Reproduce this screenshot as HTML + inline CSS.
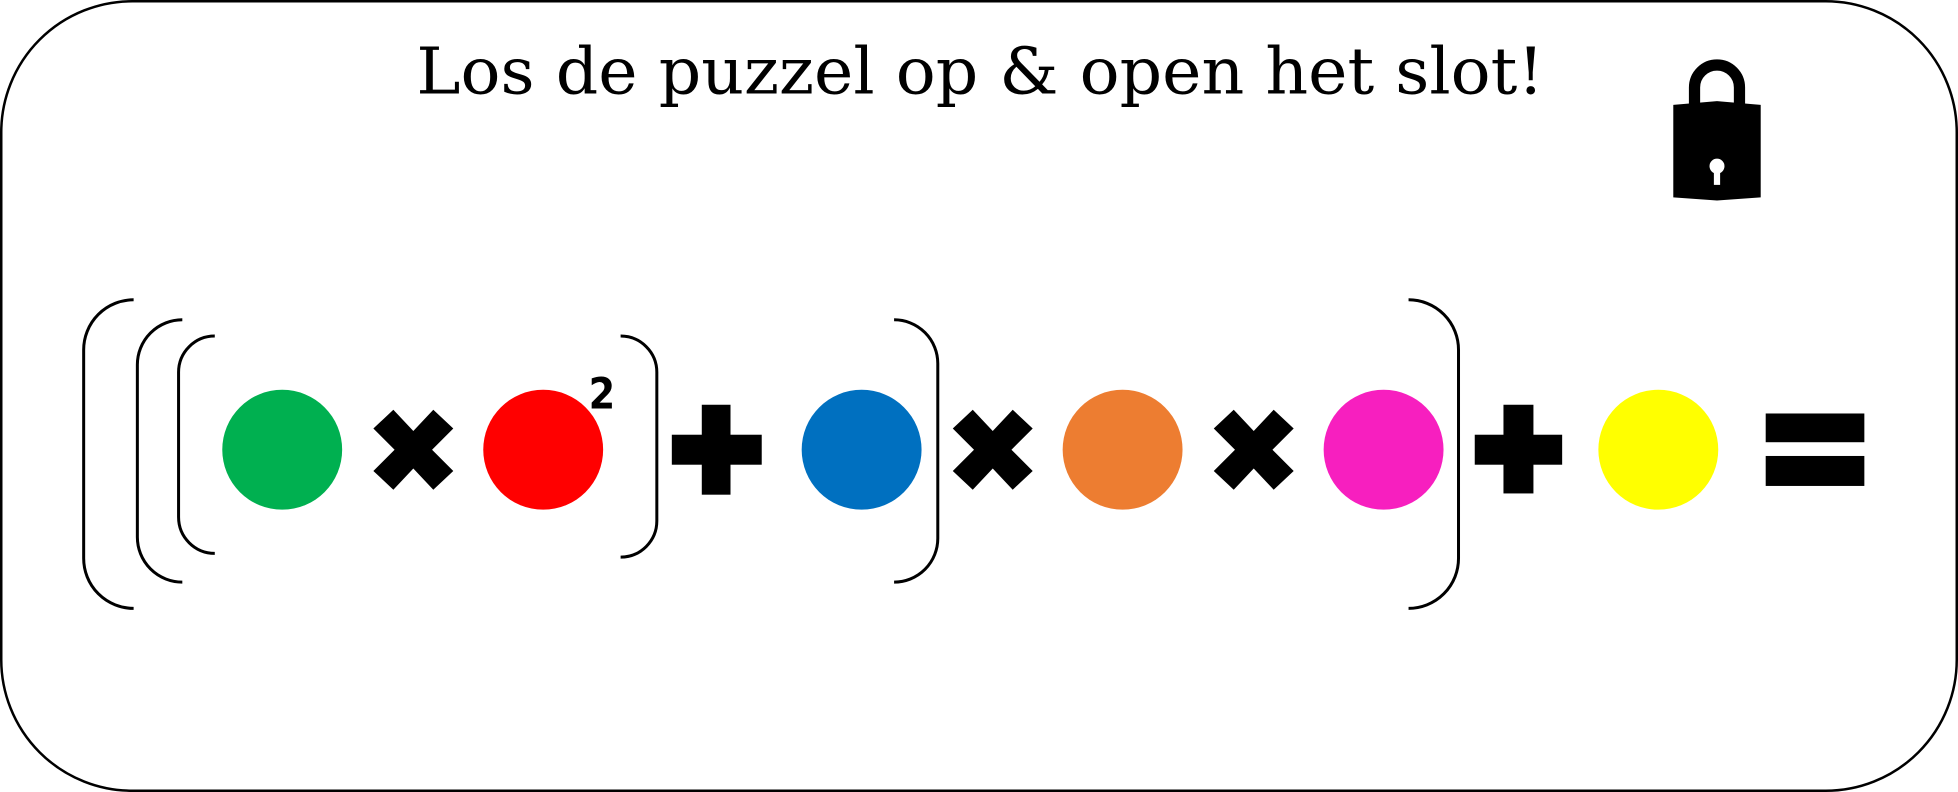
<!DOCTYPE html>
<html><head><meta charset="utf-8"><style>
html,body{margin:0;padding:0;background:#fff;width:1958px;height:792px;overflow:hidden}
svg{display:block}
</style></head><body>
<svg width="1958" height="792" viewBox="0 0 1568 634" preserveAspectRatio="none" xmlns="http://www.w3.org/2000/svg">
<rect x="1" y="1" width="1566" height="632" rx="105" ry="105" fill="#fff" stroke="#000" stroke-width="2"/>
<text x="785" y="75" text-anchor="middle" font-family="'DejaVu Serif','Liberation Serif',serif" font-size="52" textLength="903" lengthAdjust="spacingAndGlyphs" fill="#000">Los de puzzel op &amp; open het slot!</text>
<path d="M1357 84 V70 a18 18 0 0 1 36 0 V84" fill="none" stroke="#000" stroke-width="9"/>
<path d="M1340 84 L1375 81 L1410 84 V158 L1375 160.5 L1340 158 Z" fill="#000"/>
<circle cx="1375" cy="133" r="6" fill="#fff"/>
<rect x="1372.5" y="134" width="5" height="14" fill="#fff"/>
<g fill="none" stroke="#000" stroke-width="2.4">
<path d="M107 240 A40 40 0 0 0 67 280 V447 A40 40 0 0 0 107 487"/>
<path d="M146 256 A36 36 0 0 0 110 292 V430 A36 36 0 0 0 146 466"/>
<path d="M172 269 A29 29 0 0 0 143 298 V414 A29 29 0 0 0 172 443"/>
<path d="M497 269 A29 29 0 0 1 526 298 V417 A29 29 0 0 1 497 446"/>
<path d="M716 256 A35 35 0 0 1 751 291 V431 A35 35 0 0 1 716 466"/>
<path d="M1128 240 A40 40 0 0 1 1168 280 V447 A40 40 0 0 1 1128 487"/>
</g>
<circle cx="226" cy="360" r="48" fill="#00B050"/>
<circle cx="435" cy="360" r="48" fill="#FF0000"/>
<circle cx="690" cy="360" r="48" fill="#0070C0"/>
<circle cx="899" cy="360" r="48" fill="#ED7D31"/>
<circle cx="1108" cy="360" r="48" fill="#F71FBF"/>
<circle cx="1328" cy="360" r="48" fill="#FFFF00"/>
<text x="482" y="327" text-anchor="middle" font-family="'DejaVu Sans Condensed','DejaVu Sans','Liberation Sans',sans-serif" font-weight="bold" font-size="34" fill="#000">2</text>
<g fill="#000">
<path d="M-16 -32 L0 -15 L16 -32 L32 -17 L15 0 L32 17 L16 32 L0 15 L-16 32 L-32 17 L-15 0 L-32 -17 Z" transform="translate(331,360)"/>
<path d="M-16 -32 L0 -15 L16 -32 L32 -17 L15 0 L32 17 L16 32 L0 15 L-16 32 L-32 17 L-15 0 L-32 -17 Z" transform="translate(795,360)"/>
<path d="M-16 -32 L0 -15 L16 -32 L32 -17 L15 0 L32 17 L16 32 L0 15 L-16 32 L-32 17 L-15 0 L-32 -17 Z" transform="translate(1004,360)"/>
<rect x="538" y="348" width="72" height="24"/>
<rect x="562" y="324" width="23" height="72"/>
<rect x="1181" y="348" width="70" height="24"/>
<rect x="1204" y="324" width="24" height="71"/>
<rect x="1414" y="331" width="79" height="23"/>
<rect x="1414" y="365" width="79" height="24"/>
</g>
</svg>
</body></html>
